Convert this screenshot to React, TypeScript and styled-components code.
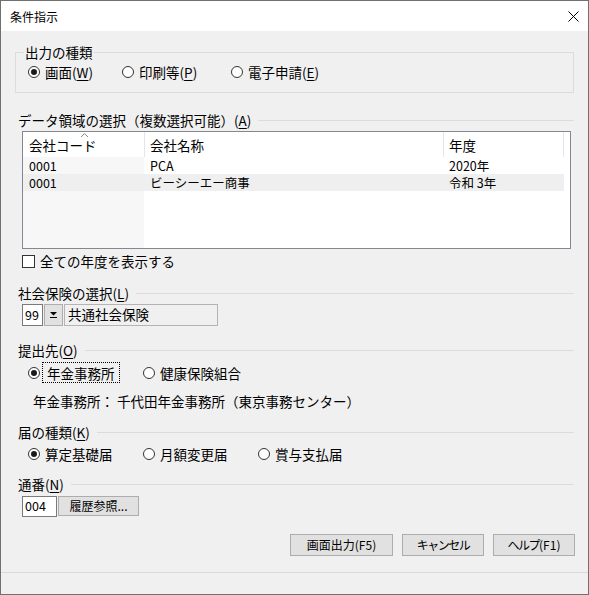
import React from 'react';
import styled, { createGlobalStyle } from 'styled-components';

const GlobalStyle = createGlobalStyle`
  html, body {
    margin: 0;
    padding: 0;
    background: #f0f0f0;
  }
  body {
    font-family: "Noto Sans CJK JP", "Noto Sans", sans-serif;
    font-size: 13.5px;
    color: #000;
  }
`;

const Window = styled.div`
  width: 589px;
  height: 595px;
  box-sizing: border-box;
  border: 1px solid #707070;
  background: #f0f0f0;
  display: flex;
  flex-direction: column;
`;

const TitleBar = styled.div`
  height: 30px;
  flex: none;
  background: #fff;
  display: flex;
  align-items: center;
  justify-content: space-between;
  padding: 0 9px;
  font-size: 12px;
`;

const Body = styled.div`
  flex: 1;
  display: flex;
  flex-direction: column;
  padding: 0 14px;
`;

const StatusBar = styled.div`
  height: 21px;
  flex: none;
  border-top: 1px solid #dadada;
`;

const GroupBox = styled.fieldset`
  margin: 12px 0 0;
  padding: 0 0 10px 8px;
  min-width: 0;
  border: 1px solid #dcdcdc;

  legend {
    padding: 0 1px;
    line-height: 18px;
  }
`;

const RadioRow = styled.div<{ $indent?: number; $top?: number }>`
  display: flex;
  align-items: center;
  height: 21px;
  margin-left: ${p => p.$indent ?? 12}px;
  margin-top: ${p => p.$top ?? 0}px;
`;

const RadioOption = styled.label<{ $w?: number }>`
  display: flex;
  align-items: center;
  width: ${p => (p.$w ? `${p.$w}px` : 'auto')};
  flex: none;
  line-height: 18px;
`;

const RadioCircle = styled.span<{ $on?: boolean }>`
  width: 12px;
  height: 12px;
  box-sizing: border-box;
  margin-left: 1px;
  margin-right: 5px;
  border: 1px solid #333;
  border-radius: 50%;
  background: #fff;
  display: flex;
  align-items: center;
  justify-content: center;

  &::after {
    content: '';
    width: 6px;
    height: 6px;
    border-radius: 50%;
    background: ${p => (p.$on ? '#1a1a1a' : 'transparent')};
  }
`;

const RadioText = styled.span<{ $focus?: boolean }>`
  margin-left: ${p => (p.$focus ? '-3px' : '0')};
  padding: ${p => (p.$focus ? '1px 4px 0 4px' : '0')};
  border: ${p => (p.$focus ? '1px dotted #000' : 'none')};
  line-height: 18px;
`;

const Key = styled.u`
  text-underline-offset: 2px;
`;

const SectionHead = styled.div<{ $top: number }>`
  display: flex;
  align-items: center;
  height: 18px;
  line-height: 18px;
  margin-top: ${p => p.$top}px;
  padding-left: 3px;

  &::after {
    content: '';
    flex: 1;
    margin-left: 7px;
    border-top: 1px solid #dcdcdc;
  }
`;

const ListBox = styled.div`
  margin: 2px 0 0 7px;
  width: 549px;
  height: 118px;
  box-sizing: border-box;
  border: 1px solid #828790;
  background: #fff;
  display: flex;
  flex-direction: column;
`;

const cols = '122px 299px 120px';

const ListHeader = styled.div`
  display: grid;
  grid-template-columns: ${cols};
  height: 25px;
  flex: none;
`;

const HeadCell = styled.div<{ $pad: number }>`
  position: relative;
  border-right: 1px solid #e5e5e5;
  padding-left: ${p => p.$pad}px;
  display: flex;
  align-items: center;
  line-height: 18px;
`;

const SortMark = styled.svg`
  position: absolute;
  left: 57px;
  top: 0;
`;

const ListBody = styled.div`
  flex: 1;
  background: linear-gradient(to right, #f7f7f7 121px, #fff 121px);
`;

const ListRow = styled.div<{ $alt?: boolean }>`
  display: grid;
  grid-template-columns: ${cols};
  width: 541px;
  height: 17px;
  line-height: 17px;
  font-size: 12.5px;
  overflow: hidden;
  background: ${p => (p.$alt ? '#efefef' : 'transparent')};
`;

const Cell = styled.div<{ $pad: number }>`
  padding-left: ${p => p.$pad}px;
  white-space: pre;
`;

const CheckRow = styled.label`
  display: flex;
  align-items: center;
  height: 18px;
  margin: 3px 0 0 7px;
  line-height: 18px;
`;

const CheckBox = styled.span`
  width: 13px;
  height: 13px;
  box-sizing: border-box;
  border: 1px solid #333;
  background: #fff;
  margin-right: 5px;
`;

const FieldRow = styled.div<{ $top: number }>`
  display: flex;
  align-items: flex-start;
  gap: 1px;
  margin: ${p => p.$top}px 0 0 7px;
`;

const TextBox = styled.div<{ $w: number; $h: number }>`
  width: ${p => p.$w}px;
  height: ${p => p.$h}px;
  box-sizing: border-box;
  border: 1px solid #7a7a7a;
  background: #fff;
  font-size: 12.5px;
  line-height: ${p => p.$h - 3}px;
  padding-left: 2px;
`;

const DropButton = styled.div`
  width: 19px;
  height: 22px;
  box-sizing: border-box;
  border: 1px solid #adadad;
  background: #e1e1e1;
  display: flex;
  align-items: center;
  justify-content: center;
`;

const ReadField = styled.div`
  width: 154px;
  height: 22px;
  box-sizing: border-box;
  border: 1px solid #b4b4b4;
  background: #f0f0f0;
  padding-left: 3px;
  line-height: 19px;
`;

const InfoText = styled.div`
  margin-top: 9px;
  padding-left: 18px;
  height: 18px;
  line-height: 18px;
`;

const PushButton = styled.button<{ $w: number; $h?: number }>`
  width: ${p => p.$w}px;
  height: ${p => p.$h ?? 22}px;
  box-sizing: border-box;
  border: 1px solid #adadad;
  background: #e1e1e1;
  font-family: inherit;
  font-size: 12px;
  color: #000;
  padding: 0;
  line-height: 18px;
`;

const NarrowKana = styled.span`
  letter-spacing: -1.5px;
`;

const ButtonRow = styled.div`
  display: flex;
  justify-content: flex-end;
  gap: 9px;
  margin: 17px -1px 0 0;
`;

const App: React.FC = () => {
  return (
    <>
      <GlobalStyle />
      <Window>
        <TitleBar>
          <span>条件指示</span>
          <svg width="11" height="11" viewBox="0 0 11 11">
            <path d="M0.5 0.5 L10.5 10.5 M10.5 0.5 L0.5 10.5" stroke="#000" strokeWidth="1" fill="none" />
          </svg>
        </TitleBar>

        <Body>
          <GroupBox>
            <legend>出力の種類</legend>
            <RadioRow $indent={3}>
              <RadioOption $w={94}>
                <RadioCircle $on />
                <RadioText>画面(<Key>W</Key>)</RadioText>
              </RadioOption>
              <RadioOption $w={109}>
                <RadioCircle />
                <RadioText>印刷等(<Key>P</Key>)</RadioText>
              </RadioOption>
              <RadioOption>
                <RadioCircle />
                <RadioText>電子申請(<Key>E</Key>)</RadioText>
              </RadioOption>
            </RadioRow>
          </GroupBox>

          <SectionHead $top={18}>
            <span>データ領域の選択（複数選択可能）(<Key>A</Key>)</span>
          </SectionHead>
          <ListBox>
            <ListHeader>
              <HeadCell $pad={6}>
                会社コード
                <SortMark width="9" height="6" viewBox="0 0 9 6">
                  <polyline points="1,5 4.5,1.5 8,5" stroke="#8a8a8a" strokeWidth="1" fill="none" />
                </SortMark>
              </HeadCell>
              <HeadCell $pad={5}>会社名称</HeadCell>
              <HeadCell $pad={5}>年度</HeadCell>
            </ListHeader>
            <ListBody>
              <ListRow>
                <Cell $pad={6}>0001</Cell>
                <Cell $pad={5}>PCA</Cell>
                <Cell $pad={5}>2020年</Cell>
              </ListRow>
              <ListRow $alt>
                <Cell $pad={6}>0001</Cell>
                <Cell $pad={5}>ビーシーエー商事</Cell>
                <Cell $pad={5}>令和 3年</Cell>
              </ListRow>
            </ListBody>
          </ListBox>
          <CheckRow>
            <CheckBox />
            全ての年度を表示する
          </CheckRow>

          <SectionHead $top={14}>
            <span>社会保険の選択(<Key>L</Key>)</span>
          </SectionHead>
          <FieldRow $top={2}>
            <TextBox $w={21} $h={22}>99</TextBox>
            <DropButton>
              <svg width="9" height="8" viewBox="0 0 9 8">
                <path d="M1 1 H8 L4.5 4.5 Z" fill="#000" />
                <path d="M1 6.5 H8" stroke="#000" strokeWidth="1" />
              </svg>
            </DropButton>
            <ReadField>共通社会保険</ReadField>
          </FieldRow>

          <SectionHead $top={15}>
            <span>提出先(<Key>O</Key>)</span>
          </SectionHead>
          <RadioRow $indent={12} $top={3}>
            <RadioOption $w={115}>
              <RadioCircle $on />
              <RadioText $focus>年金事務所</RadioText>
            </RadioOption>
            <RadioOption>
              <RadioCircle />
              <RadioText>健康保険組合</RadioText>
            </RadioOption>
          </RadioRow>
          <InfoText>年金事務所： 千代田年金事務所（東京事務センター）</InfoText>

          <SectionHead $top={13}>
            <span>届の種類(<Key>K</Key>)</span>
          </SectionHead>
          <RadioRow $indent={12} $top={2}>
            <RadioOption $w={115}>
              <RadioCircle $on />
              <RadioText>算定基礎届</RadioText>
            </RadioOption>
            <RadioOption $w={115}>
              <RadioCircle />
              <RadioText>月額変更届</RadioText>
            </RadioOption>
            <RadioOption>
              <RadioCircle />
              <RadioText>賞与支払届</RadioText>
            </RadioOption>
          </RadioRow>

          <SectionHead $top={11}>
            <span>通番(<Key>N</Key>)</span>
          </SectionHead>
          <FieldRow $top={3}>
            <TextBox $w={35} $h={21}>004</TextBox>
            <PushButton $w={81} $h={20}>履歴参照...</PushButton>
          </FieldRow>

          <ButtonRow>
            <PushButton $w={103}>画面出力(F5)</PushButton>
            <PushButton $w={82}><NarrowKana>キャンセル</NarrowKana></PushButton>
            <PushButton $w={82}><NarrowKana>ヘルプ</NarrowKana>(F1)</PushButton>
          </ButtonRow>
        </Body>

        <StatusBar />
      </Window>
    </>
  );
};

export default App;
